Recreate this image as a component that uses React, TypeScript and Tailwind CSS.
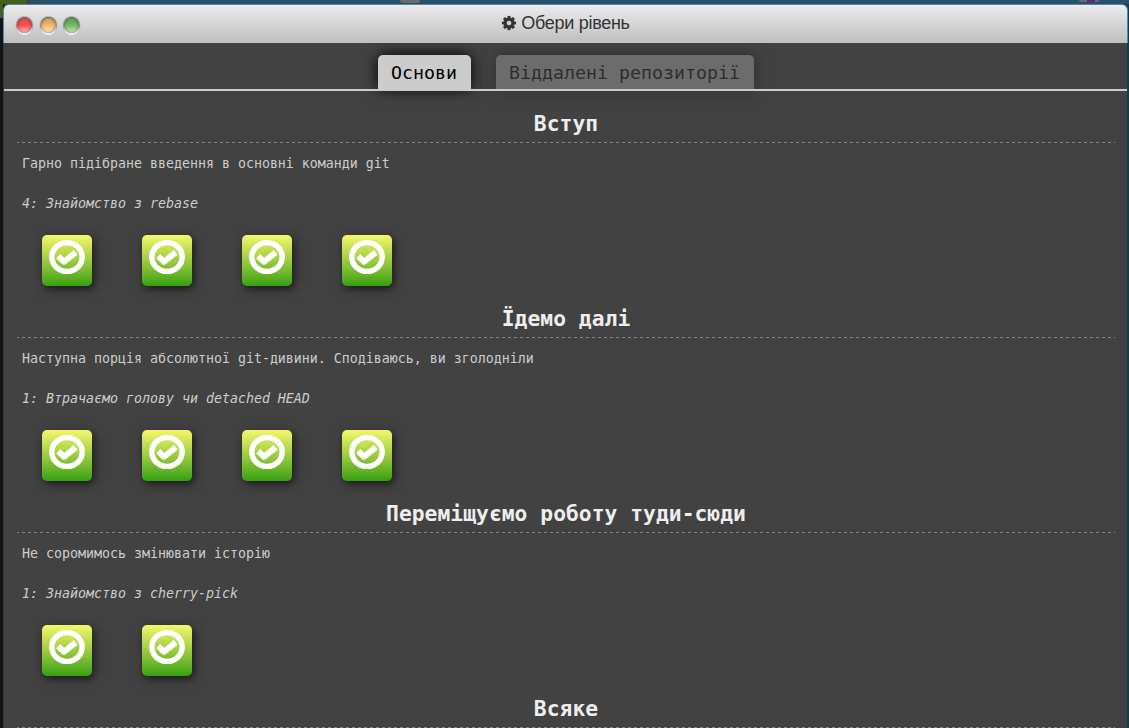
import React from "react";

type Section = { title: string; about: string; level: string; count: number };

const sections: Section[] = [
  { title: "Вступ", about: "Гарно підібране введення в основні команди git", level: "4: Знайомство з rebase", count: 4 },
  { title: "Їдемо далі", about: "Наступна порція абсолютної git-дивини. Сподіваюсь, ви зголодніли", level: "1: Втрачаємо голову чи detached HEAD", count: 4 },
  { title: "Переміщуємо роботу туди-сюди", about: "Не соромимось змінювати історію", level: "1: Знайомство з cherry-pick", count: 2 },
  { title: "Всяке", about: "", level: "", count: 0 },
];

function Gear() {
  return (
    <svg viewBox="128 128 1536 1536" className="mt-[-3px] h-[14px] w-[14px] overflow-visible" fill="#333" stroke="#333" strokeWidth="20">
      <path d="M1152 896q0-106-75-181t-181-75-181 75-75 181 75 181 181 75 181-75 75-181zm512-109v222q0 12-8 23t-20 13l-185 28q-19 54-39 91 35 50 107 138 10 12 10 25t-9 23q-27 37-99 108t-94 71q-12 0-26-9l-138-108q-44 23-91 38-16 136-29 186-7 28-36 28h-222q-14 0-24.5-8.5t-11.5-21.5l-28-184q-49-16-90-37l-141 107q-10 9-25 9-14 0-25-11-126-114-165-168-7-10-7-23 0-12 8-23 15-21 51-66.5t54-70.5q-27-50-41-99l-183-27q-13-2-21-12.5t-8-23.5v-222q0-12 8-23t19-13l186-28q14-46 39-92-40-57-107-138-10-12-10-24 0-10 9-23 26-36 98.5-107.5t94.5-71.5q13 0 26 10l138 107q44-23 91-38 16-136 29-186 7-28 36-28h222q14 0 24.5 8.5t11.5 21.5l28 184q49 16 90 37l142-107q9-9 24-9 13 0 25 10 129 119 165 170 7 8 7 22 0 12-8 23-15 21-51 66.5t-54 70.5q26 50 41 98l183 28q13 2 21 12.5t8 23.5z" />
    </svg>
  );
}

function SolvedLevel() {
  return (
    <button className="h-[51px] w-[50px] rounded-[5px] bg-linear-to-b from-[#f4f76c] to-[#32a00f] shadow-[2px_3px_10px_rgba(0,0,0,0.65)]">
      <svg viewBox="0 0 50 51" className="block h-[51px] w-[50px]" fill="none" stroke="#fff">
        <ellipse cx="25" cy="22" rx="15.2" ry="14.4" strokeWidth="5.4" />
        <path d="M16.2 21.2 L22.1 26.8 L33.7 17.4" strokeWidth="5.9" strokeLinejoin="round" />
      </svg>
    </button>
  );
}

function Light({ tone }: { tone: string }) {
  return (
    <div className={`h-[15px] w-[15px] rounded-full shadow-[0_2px_0_rgba(255,255,255,0.8),0_-1px_2px_rgba(0,0,0,0.6),0_0_1px_1px_rgba(0,0,0,0.25),inset_0_0_3px_rgba(0,0,0,0.5)] ${tone}`} />
  );
}

export default function App() {
  return (
    <div className="flex h-[728px] w-[1129px] flex-col overflow-hidden bg-[linear-gradient(90deg,#141414_0_4px,#17394a_4px)] font-['DejaVu_Sans_Mono',monospace]">
      <div className="flex h-1 shrink-0 bg-[#28506b]">
        <div className="w-[26px] bg-[#43601c]" />
        <div className="w-5 bg-linear-to-r from-[#334650] to-[#28506b]" />
        <div className="ml-[354px] h-[3px] w-5 rounded-b-full bg-[#6b6b6b]" />
        <div className="ml-[659px] flex h-[2px] w-5 overflow-hidden rounded-b-full bg-[#6b6b6b]">
          <div className="ml-2 w-2 bg-[#552b78]" />
        </div>
      </div>
      <div className="flex min-h-0 flex-1">
        <div className="w-[3px] shrink-0 bg-[linear-gradient(#43601c_0_14px,#141414_14px)]" />
        <div className="flex min-w-0 flex-1 flex-col overflow-hidden">
          <header className="relative flex h-[39px] w-[1125px] shrink-0 items-center justify-center rounded-t-[6px] border-x border-t border-[#5888a9] bg-linear-to-b from-[#ececec] to-[#bfbfbf]">
            <div className="absolute top-[12.5px] left-[13px] flex gap-[8.5px]">
              <Light tone="bg-[linear-gradient(#f04e4e_0_45%,#ff6666_60%,#f8caca)]" />
              <Light tone="bg-[linear-gradient(#e3ad61_0_30%,#f7bf72_55%,#faecd8)]" />
              <Light tone="bg-[linear-gradient(#6cac59_0_30%,#7cc168_55%,#d7efd0)]" />
            </div>
            <div className="flex items-center gap-[5px] pl-px font-['Liberation_Sans',sans-serif] text-[18px] leading-6 tracking-[-0.3px] text-[#333]">
              <Gear />
              <span className="mt-[-2px]">Обери рівень</span>
            </div>
          </header>
          <main className="mr-[2px] min-h-0 flex-1 overflow-hidden border-l border-[#353535] bg-[#424242]">
            <nav className="flex h-[46px] items-end justify-center gap-[25px] text-[18.27px] text-black">
              <div className="flex h-[34px] w-[93px] items-center justify-center rounded-t-[5px] bg-[#ccc] pt-[2px] shadow-[0_0_15px_#000]">Основи</div>
              <div className="flex h-[34px] w-[258px] items-center justify-center rounded-t-[5px] bg-[#ccc] pt-[2px] opacity-30 shadow-[0_0_15px_#000]">Віддалені репозиторії</div>
            </nav>
            <div className="relative h-[2px] bg-[#ccc]" />
            <div className="pt-[15px] pr-3 pl-[13px]">
              {sections.map((s) => (
                <section key={s.title} className="h-[195px]">
                  <h2 className="h-9 text-center text-[21.3px] leading-9 font-bold tracking-[0.03px] text-[#eee]">{s.title}</h2>
                  <div className="h-px bg-[repeating-linear-gradient(90deg,#848484_0_2px,transparent_2px_5px,#848484_5px_6px)]" />
                  <p className="mt-[11px] h-5 pl-[5px] text-[13.29px] leading-5 whitespace-nowrap text-[#ccc]">{s.about}</p>
                  <p className="mt-5 h-5 pl-[5px] text-[13.29px] leading-5 whitespace-nowrap text-[#ccc] italic">{s.level}</p>
                  <div className="mt-[21px] flex gap-[50px] pl-[25px]">
                    {Array.from({ length: s.count }, (_, i) => <SolvedLevel key={i} />)}
                  </div>
                </section>
              ))}
            </div>
          </main>
        </div>
      </div>
    </div>
  );
}
